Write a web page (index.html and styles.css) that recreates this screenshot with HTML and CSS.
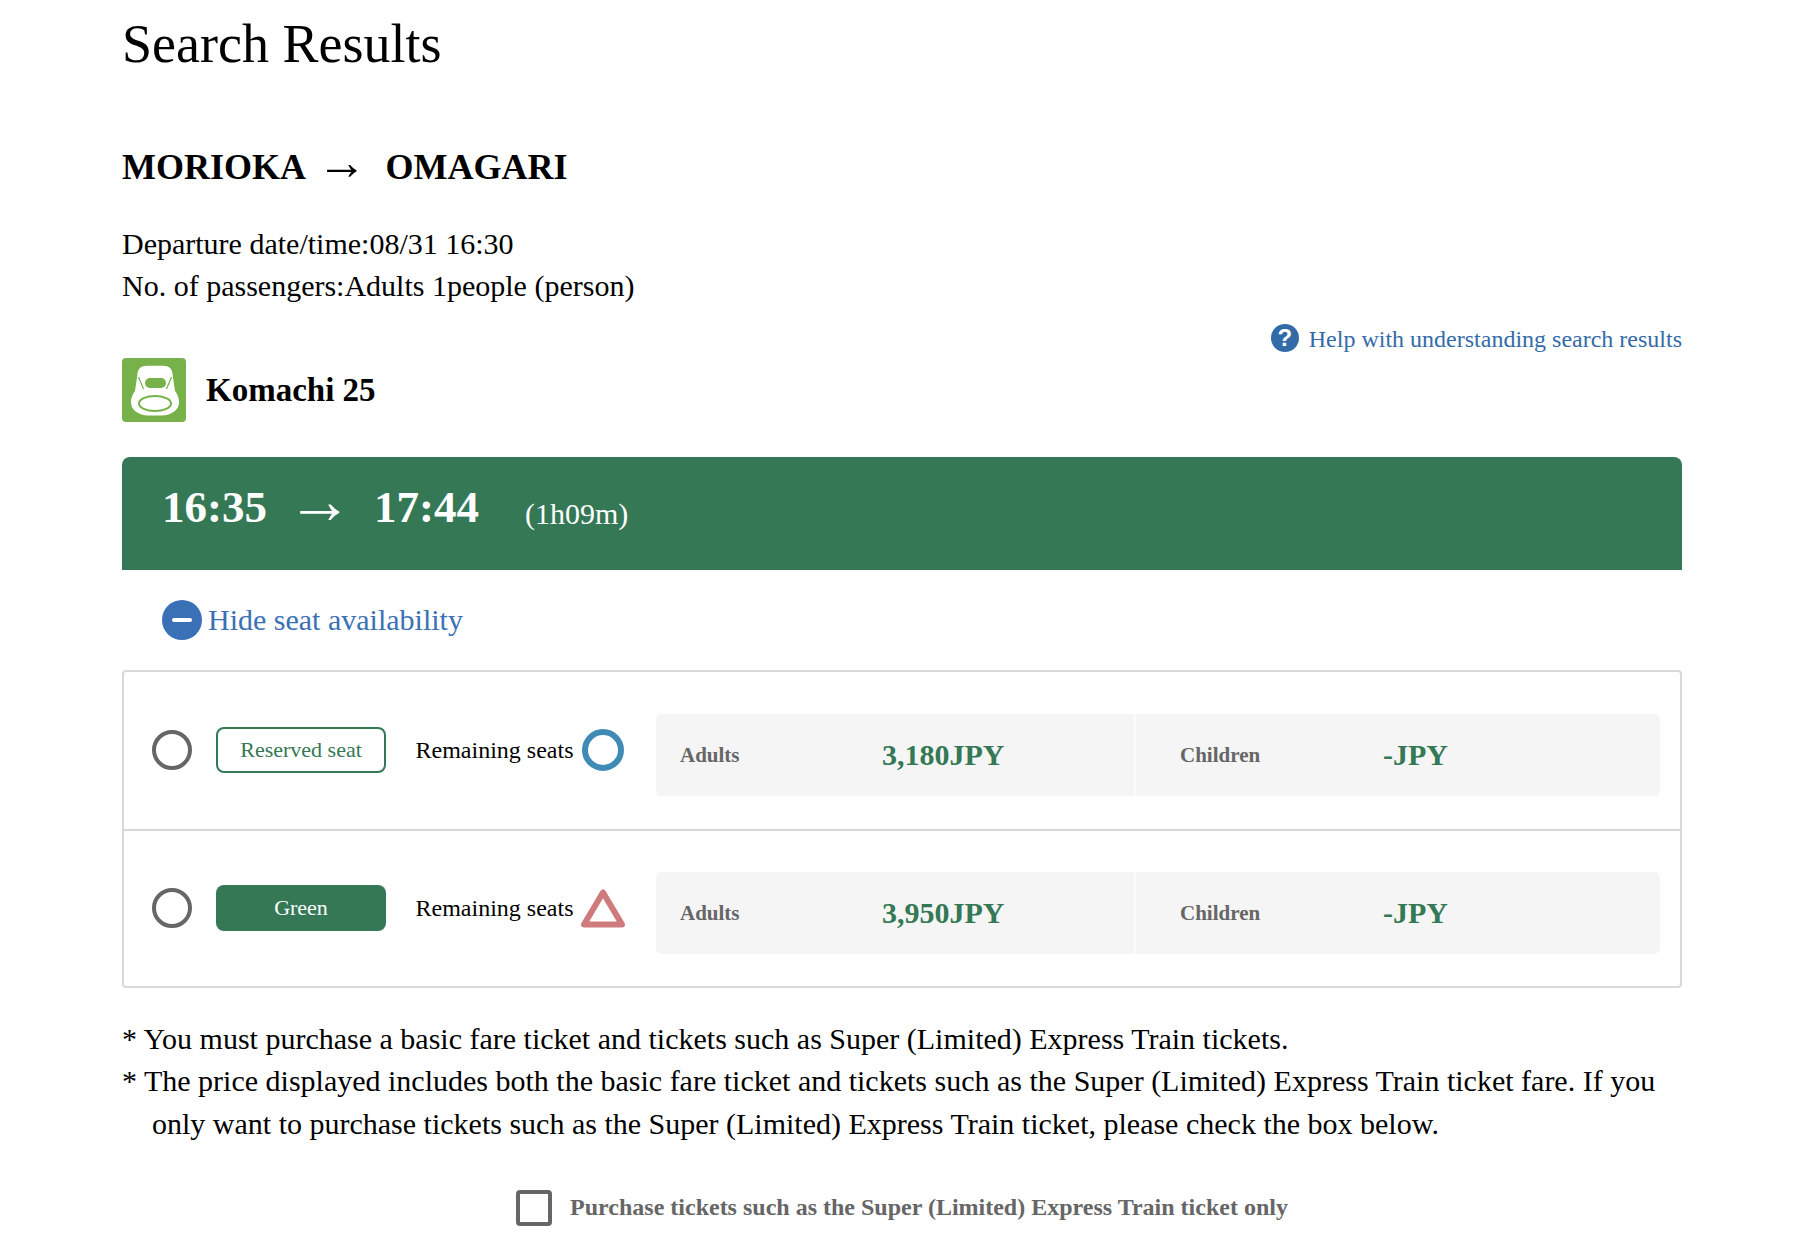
FILE: index.html
```html
<!DOCTYPE html>
<html lang="en">
<head>
<meta charset="utf-8">
<title>Search Results</title>
<link rel="stylesheet" href="styles.css">
</head>
<body>
<main class="page">
  <h1 class="title">Search Results</h1>
  <h2 class="route"><span>MORIOKA</span><span class="route-arrow">→</span><span>OMAGARI</span></h2>
  <p class="meta">Departure date/time:08/31 16:30<br>No. of passengers:Adults 1people (person)</p>

  <div class="help-row">
    <a class="help" href="#">
      <span class="help-icon">?</span>
      <span>Help with understanding search results</span>
    </a>
  </div>

  <div class="train">
    <svg class="train-icon" viewBox="0 0 64 64">
      <rect width="64" height="64" rx="4" fill="#76b14a"/>
      <path d="M25 7.700H41C47 7.700 50.500 11 50.500 16L53 33C55.500 36 57 40 57 44.500C57 52 49 57.500 40 57.500H26C17 57.500 9 52 9 44.500C9 40 10.500 36 13 33L15.500 16C15.500 11 19 7.700 25 7.700Z" fill="#fff"/>
      <path d="M16.500 19L21.500 31M49.500 19L44.500 31" stroke="#76b14a" stroke-width="1.200" fill="none"/>
      <rect x="23" y="20" width="21" height="10" rx="5" fill="#76b14a"/>
      <ellipse cx="33" cy="45.500" rx="16" ry="7.500" fill="#fff" stroke="#76b14a" stroke-width="2"/>
    </svg>
    <h3 class="train-name">Komachi 25</h3>
  </div>

  <section class="times">
    <strong class="time">16:35</strong>
    <span class="time-arrow">→</span>
    <strong class="time">17:44</strong>
    <span class="duration">(1h09m)</span>
  </section>

  <a class="toggle" href="#">
    <span class="toggle-icon"><span class="toggle-minus"></span></span>
    <span>Hide seat availability</span>
  </a>

  <div class="seats">
    <div class="seat-row">
      <span class="radio"></span>
      <span class="tag tag-outline">Reserved seat</span>
      <span class="remaining">Remaining seats</span>
      <span class="mark-circle"></span>
      <div class="fares">
        <div class="fare fare-adult"><span class="fare-label">Adults</span><span class="fare-price">3,180JPY</span></div>
        <div class="fare fare-child"><span class="fare-label">Children</span><span class="fare-price">-JPY</span></div>
      </div>
    </div>
    <div class="seat-row">
      <span class="radio"></span>
      <span class="tag tag-solid">Green</span>
      <span class="remaining">Remaining seats</span>
      <svg class="mark-triangle" viewBox="0 0 44 40"><path d="M22 4.500L3 36.500h38z" fill="none" stroke="#cf7a7c" stroke-width="6" stroke-linejoin="round"/></svg>
      <div class="fares">
        <div class="fare fare-adult"><span class="fare-label">Adults</span><span class="fare-price">3,950JPY</span></div>
        <div class="fare fare-child"><span class="fare-label">Children</span><span class="fare-price">-JPY</span></div>
      </div>
    </div>
  </div>

  <ul class="notes">
    <li>* You must purchase a basic fare ticket and tickets such as Super (Limited) Express Train tickets.</li>
    <li>* The price displayed includes both the basic fare ticket and tickets such as the Super (Limited) Express Train ticket fare. If you only want to purchase tickets such as the Super (Limited) Express Train ticket, please check the box below.</li>
  </ul>

  <label class="only">
    <span class="checkbox"></span>
    <span>Purchase tickets such as the Super (Limited) Express Train ticket only</span>
  </label>
</main>
</body>
</html>
```

FILE: styles.css
```css
html, body {
  margin: 0;
  padding: 0;
  background: #fff;
  overflow: hidden;
}
body {
  font-family: "Liberation Serif", "Times New Roman", serif;
  color: #000;
}
a {
  text-decoration: none;
}
.page {
  width: 1560px;
  margin-left: 122px;
  height: 1242px;
}
.title {
  margin: 0;
  padding-top: 13px;
  font-size: 54px;
  line-height: 62px;
  font-weight: 400;
}
.route {
  display: flex;
  align-items: baseline;
  height: 44px;
  margin: 65px 0 0;
  font-size: 36px;
  line-height: 44px;
  font-weight: 700;
}
.route-arrow {
  margin: 0 18.500px 0 11px;
  font-size: 50px;
  line-height: 44px;
  font-weight: 400;
}
.meta {
  margin: 39px 0 0;
  font-size: 30px;
  line-height: 42px;
}
.help-row {
  display: flex;
  justify-content: flex-end;
  margin-top: 18px;
}
.help {
  display: flex;
  align-items: center;
  gap: 10px;
  font-size: 24px;
  line-height: 28px;
  color: #336ba9;
}
.help-icon {
  display: flex;
  align-items: center;
  justify-content: center;
  width: 28px;
  height: 28px;
  margin-top: -2px;
  border-radius: 50%;
  background: #336ba9;
  color: #fff;
  font-family: "Liberation Sans", Arial, sans-serif;
  font-size: 24px;
  font-weight: 700;
}
.train {
  display: flex;
  align-items: center;
  gap: 20px;
  margin-top: 5px;
}
.train-icon {
  width: 64px;
  height: 64px;
}
.train-name {
  margin: 0;
  font-size: 33px;
  line-height: 64px;
  font-weight: 700;
}
.times {
  display: flex;
  align-items: flex-start;
  height: 113px;
  box-sizing: border-box;
  margin-top: 35px;
  padding: 20px 0 0 40px;
  background: #347856;
  border-radius: 8px 8px 0 0;
  color: #fff;
}
.time {
  font-size: 45px;
  line-height: 60px;
}
.time-arrow {
  margin: -6px 21px 0 20px;
  font-size: 66px;
  line-height: 60px;
}
.duration {
  margin: 7px 0 0 46px;
  font-size: 30px;
  line-height: 60px;
}
.toggle {
  display: flex;
  align-items: center;
  gap: 6px;
  margin: 30px 0 0 40px;
  font-size: 30px;
  line-height: 40px;
  color: #3a70b5;
}
.toggle-icon {
  display: flex;
  align-items: center;
  justify-content: center;
  width: 40px;
  height: 40px;
  border-radius: 50%;
  background: #3a70b5;
}
.toggle-minus {
  width: 20px;
  height: 4px;
  border-radius: 2px;
  background: #fff;
}
.seats {
  margin-top: 30px;
  border: 2px solid #d8d8d8;
  border-radius: 4px;
}
.seat-row {
  display: flex;
  align-items: flex-start;
  height: 157px;
  box-sizing: border-box;
  padding: 58px 20px 0 28px;
}
.seat-row + .seat-row {
  padding-top: 57px;
  border-top: 2px solid #d8d8d8;
}
.radio {
  width: 40px;
  height: 40px;
  box-sizing: border-box;
  border: 4px solid #666;
  border-radius: 50%;
  flex: none;
}
.tag {
  display: flex;
  align-items: center;
  justify-content: center;
  width: 170px;
  height: 46px;
  box-sizing: border-box;
  margin: -3px 0 0 24px;
  border-radius: 8px;
  font-size: 22px;
  flex: none;
}
.tag-outline {
  border: 2px solid #347856;
  color: #347856;
}
.tag-solid {
  background: #347856;
  color: #fff;
}
.remaining {
  margin-left: 29.500px;
  width: 167.500px;
  font-size: 24px;
  line-height: 40px;
  flex: none;
}
.mark-circle {
  width: 42px;
  height: 42px;
  box-sizing: border-box;
  margin: -1px -1px 0;
  border: 6px solid #3f8bb5;
  border-radius: 50%;
  flex: none;
}
.mark-triangle {
  width: 44px;
  height: 40px;
  margin-left: -2px;
  margin-right: -2px;
  flex: none;
}
.fares {
  display: flex;
  flex: 1;
  height: 82px;
  margin: -16px 0 0 33px;
  gap: 2px;
  background: #fbfbfb;
  border-radius: 6px;
}
.fare {
  display: flex;
  align-items: center;
  box-sizing: border-box;
  background: #f5f5f5;
}
.fare-adult {
  width: 478px;
  padding-left: 24px;
  border-radius: 6px 0 0 6px;
}
.fare-child {
  flex: 1;
  padding-left: 44px;
  border-radius: 0 6px 6px 0;
}
.fare-label {
  font-size: 21px;
  font-weight: 700;
  color: #666;
}
.fare-adult .fare-label {
  width: 202px;
}
.fare-child .fare-label {
  width: 203px;
}
.fare-price {
  font-size: 30px;
  font-weight: 700;
  color: #347856;
}
.notes {
  margin: 30px 0 0;
  padding: 0;
  list-style: none;
  font-size: 30px;
  line-height: 42.300px;
}
.notes li {
  padding-left: 30px;
  text-indent: -30px;
}
.only {
  display: flex;
  align-items: center;
  justify-content: center;
  gap: 18px;
  margin-top: 45px;
  font-size: 24px;
  font-weight: 700;
  color: #666;
}
.checkbox {
  width: 36px;
  height: 36px;
  box-sizing: border-box;
  border: 4px solid #666;
  border-radius: 4px;
}
```
